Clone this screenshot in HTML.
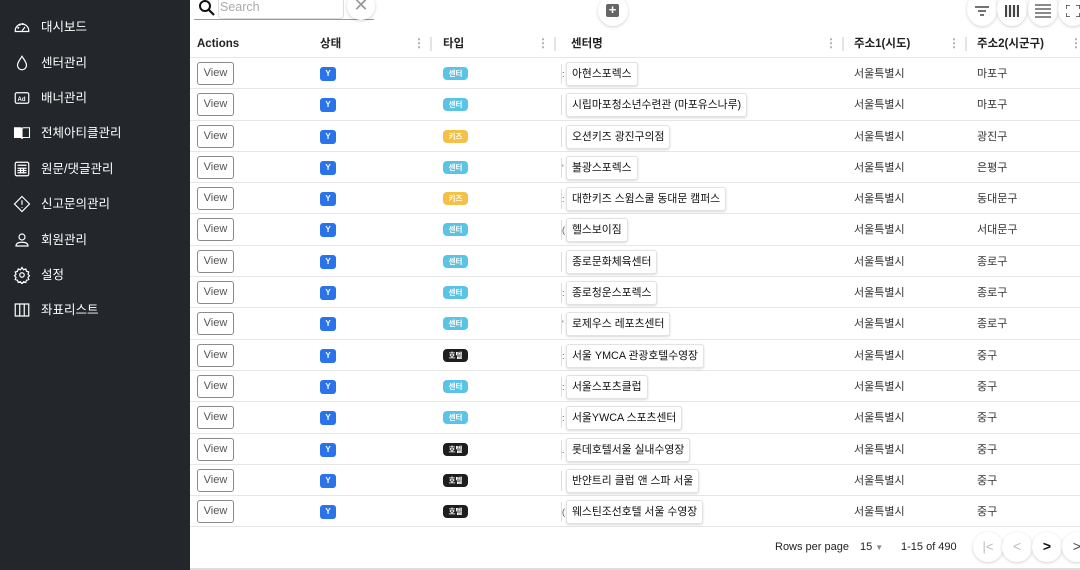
<!DOCTYPE html>
<html><head><meta charset="utf-8"><style>
*{box-sizing:border-box;margin:0;padding:0}
body{width:1080px;height:570px;overflow:hidden;background:#fff;font-family:"Liberation Sans","Noto Sans CJK KR",sans-serif;position:relative}
.sb{position:absolute;left:0;top:0;width:190px;height:570px;background:#23262b}
.sb .it{position:absolute;left:13px;height:20px;display:flex;align-items:center;color:#fff;font-size:12.5px;line-height:20px}
.sb .it svg{width:18px;height:18px;margin-right:10px;flex:none}
.main{position:absolute;left:190px;top:0;width:890px;height:570px}
.hdr{position:absolute;top:30px;left:0;width:890px;height:28px;border-bottom:1px solid #e6e6e6;font-size:11.5px;font-weight:bold;color:#222}
.hdr span{position:absolute;top:7px;line-height:14px}
.dots{position:absolute;top:4px;width:20px;height:20px;border-radius:50%;color:#aaa;font-size:12px;text-align:center;line-height:19px;font-weight:bold}
.sep{position:absolute;top:7px;width:2px;height:14px;background:#e4e4e4}
.row{position:relative;height:31.3px;border-bottom:1px solid #e6e6e6;font-size:11px;color:#222;line-height:14px}
.row>*{position:absolute}
.view{left:7px;top:4px;width:37px;height:23px;border:1px solid #8a8a8a;border-radius:3px;color:#555;font-size:11px;text-align:center;line-height:21px}
.y{left:130px;top:9px;width:16px;height:14px;border-radius:3px;background:#2a73e8;color:#fff;font-size:8px;font-weight:bold;text-align:center;line-height:14px}
.t{left:253px;top:9px;width:25px;height:13px;border-radius:4px;color:#fff;font-size:7.5px;font-weight:bold;text-align:center;line-height:13px}
.c{background:#5bc4e6}.k{background:#f4c045}.h{background:#1e1e1e}
.trunc{left:371px;top:6px;width:6px;height:20px;border-left:1px solid #ddd;font-size:9px;color:#555;line-height:20px;overflow:hidden}
.chip{left:376px;top:4px;height:24px;padding:0 5px;border:1px solid #e2e2e2;border-radius:3px;box-shadow:0 1px 2px rgba(0,0,0,.15);line-height:22px;font-size:10.8px;background:#fff;white-space:nowrap;color:#111}
.a1{left:664px;top:9px;color:#333}.a2{left:787px;top:9px;color:#333}
.cb{position:absolute;border-radius:50%;background:#fff;box-shadow:0 1px 3px rgba(0,0,0,.18)}
</style></head><body>
<div class="sb">
 <div class="it" style="top:17px"><svg viewBox="0 0 24 24" fill="none" stroke="#fff" stroke-width="1.6"><path d="M3 17a9 9 0 1 1 18 0v1H3z"/><path d="M12 17l4-5"/><circle cx="7" cy="13" r=".6"/><circle cx="9" cy="9" r=".6"/><circle cx="13" cy="8" r=".6"/></svg>대시보드</div>
 <div class="it" style="top:53px"><svg viewBox="0 0 24 24" fill="none" stroke="#fff" stroke-width="1.6"><path d="M12 3C9 8 6 11 6 15a6 6 0 0 0 12 0c0-4-3-7-6-12z"/></svg>센터관리</div>
 <div class="it" style="top:88px"><svg viewBox="0 0 24 24" fill="none" stroke="#fff" stroke-width="1.6"><rect x="3" y="5" width="18" height="14" rx="2"/><text x="6" y="16" font-size="8" fill="#fff" stroke="none" font-weight="bold" font-family="Liberation Sans">Ad</text></svg>배너관리</div>
 <div class="it" style="top:123px"><svg viewBox="0 0 24 24" fill="#fff" stroke="#fff" stroke-width="1.4"><path d="M2 5h8a2 2 0 0 1 2 2v13a2 2 0 0 0-2-2H2z"/><path d="M22 5h-8a2 2 0 0 0-2 2v13a2 2 0 0 1 2-2h8z" fill="none"/></svg>전체아티클관리</div>
 <div class="it" style="top:159px"><svg viewBox="0 0 24 24" fill="none" stroke="#fff" stroke-width="1.6"><rect x="3" y="3" width="18" height="18" rx="2"/><path d="M6 7h12M6 11h12M6 14h12M6 17h12M10 11v7M14 11v7"/></svg>원문/댓글관리</div>
 <div class="it" style="top:194px"><svg viewBox="0 0 24 24" fill="none" stroke="#fff" stroke-width="1.6"><path d="M12 2l10 10-10 10L2 12z"/><path d="M12 7v6M12 16v1"/></svg>신고문의관리</div>
 <div class="it" style="top:230px"><svg viewBox="0 0 24 24" fill="none" stroke="#fff" stroke-width="1.6"><circle cx="12" cy="8" r="4"/><path d="M4 20c0-4 4-5 8-5s8 1 8 5z"/></svg>회원관리</div>
 <div class="it" style="top:265px"><svg viewBox="0 0 24 24" fill="none" stroke="#fff" stroke-width="1.6"><circle cx="12" cy="12" r="3"/><path d="M12 2l2 3 3-1 1 3 3 1-1 3 2 2-2 2 1 3-3 1-1 3-3-1-2 3-2-3-3 1-1-3-3-1 1-3-2-2 2-2-1-3 3-1 1-3 3 1z"/></svg>설정</div>
 <div class="it" style="top:300px"><svg viewBox="0 0 24 24" fill="none" stroke="#fff" stroke-width="1.6"><path d="M3 4h18v16H3zM9 4v16M15 4v16"/></svg>좌표리스트</div>
</div>
<div class="main">
 <svg style="position:absolute;left:8px;top:0" width="18" height="16" viewBox="0 0 18 16"><circle cx="7" cy="6" r="5" fill="none" stroke="#111" stroke-width="2"/><path d="M11 10l5 5" stroke="#111" stroke-width="2.2"/></svg>
 <div style="position:absolute;left:28px;top:-6px;width:126px;height:25px;border:1px solid #ddd;border-radius:4px;font-size:12.5px;color:#aaa;padding:5px 0 0 1px;line-height:14px">Search</div>
 <div style="position:absolute;left:4px;top:19px;width:180px;height:1px;background:#999"></div>
 <div class="cb" style="left:157px;top:-8px;width:28px;height:28px;color:#999;font-size:18px;text-align:center;line-height:26px">✕</div>
 <div class="cb" style="left:408px;top:-4px;width:30px;height:30px"><div style="position:absolute;left:8px;top:8px;width:13px;height:13px;background:#666;border-radius:2px;color:#fff;font-size:13px;line-height:12px;text-align:center;font-weight:bold">+</div></div>
 <div class="cb" style="left:777px;top:-8px;width:30px;height:34px;text-align:center"><svg width="14" height="10" style="margin-top:14px"><path d="M0 1h14M3 5h8M5 9h4" stroke="#444" stroke-width="1.4"/></svg></div>
 <div class="cb" style="left:807px;top:-8px;width:30px;height:34px;text-align:center"><svg width="14" height="12" style="margin-top:13px"><path d="M1 0v12M5 0v12M9 0v12M13 0v12" stroke="#444" stroke-width="2.2"/></svg></div>
 <div class="cb" style="left:838px;top:-8px;width:30px;height:34px;text-align:center"><svg width="16" height="14" style="margin-top:12px"><path d="M0 1h16M0 5h16M0 9h16M0 13h16" stroke="#444" stroke-width="1.2"/></svg></div>
 <div class="cb" style="left:868px;top:-8px;width:30px;height:34px"><svg width="14" height="12" style="margin:13px 0 0 8px"><path d="M0 4V0h4M10 0h4v4M0 8v4h4M14 8v4h-4" fill="none" stroke="#444" stroke-width="1.5"/></svg></div>

 <div class="hdr">
  <span style="left:7px">Actions</span>
  <span style="left:130px">상태</span><div class="dots" style="left:219px">⋮</div><div class="sep" style="left:240px"></div>
  <span style="left:253px">타입</span><div class="dots" style="left:343px">⋮</div><div class="sep" style="left:364px"></div>
  <span style="left:381px">센터명</span><div class="dots" style="left:631px">⋮</div><div class="sep" style="left:652px"></div>
  <span style="left:664px">주소1(시도)</span><div class="dots" style="left:754px">⋮</div><div class="sep" style="left:775px"></div>
  <span style="left:787px">주소2(시군구)</span><div class="dots" style="left:876px">⋮</div>
 </div>
 <div style="position:absolute;top:58px;left:0;width:890px">
  <div class="row"><div class="view">View</div><div class="y">Y</div><div class="t c">센터</div><div class="trunc">:</div><div class="chip">아현스포렉스</div><div class="a1">서울특별시</div><div class="a2">마포구</div></div>
  <div class="row"><div class="view">View</div><div class="y">Y</div><div class="t c">센터</div><div class="trunc"></div><div class="chip">시립마포청소년수련관 (마포유스나루)</div><div class="a1">서울특별시</div><div class="a2">마포구</div></div>
  <div class="row"><div class="view">View</div><div class="y">Y</div><div class="t k">키즈</div><div class="trunc"></div><div class="chip">오션키즈 광진구의점</div><div class="a1">서울특별시</div><div class="a2">광진구</div></div>
  <div class="row"><div class="view">View</div><div class="y">Y</div><div class="t c">센터</div><div class="trunc">'</div><div class="chip">불광스포렉스</div><div class="a1">서울특별시</div><div class="a2">은평구</div></div>
  <div class="row"><div class="view">View</div><div class="y">Y</div><div class="t k">키즈</div><div class="trunc">:</div><div class="chip">대한키즈 스윔스쿨 동대문 캠퍼스</div><div class="a1">서울특별시</div><div class="a2">동대문구</div></div>
  <div class="row"><div class="view">View</div><div class="y">Y</div><div class="t c">센터</div><div class="trunc">(</div><div class="chip">헬스보이짐</div><div class="a1">서울특별시</div><div class="a2">서대문구</div></div>
  <div class="row"><div class="view">View</div><div class="y">Y</div><div class="t c">센터</div><div class="trunc"></div><div class="chip">종로문화체육센터</div><div class="a1">서울특별시</div><div class="a2">종로구</div></div>
  <div class="row"><div class="view">View</div><div class="y">Y</div><div class="t c">센터</div><div class="trunc">:</div><div class="chip">종로청운스포렉스</div><div class="a1">서울특별시</div><div class="a2">종로구</div></div>
  <div class="row"><div class="view">View</div><div class="y">Y</div><div class="t c">센터</div><div class="trunc">'</div><div class="chip">로제우스 레포츠센터</div><div class="a1">서울특별시</div><div class="a2">종로구</div></div>
  <div class="row"><div class="view">View</div><div class="y">Y</div><div class="t h">호텔</div><div class="trunc">:</div><div class="chip">서울 YMCA 관광호텔수영장</div><div class="a1">서울특별시</div><div class="a2">중구</div></div>
  <div class="row"><div class="view">View</div><div class="y">Y</div><div class="t c">센터</div><div class="trunc">:</div><div class="chip">서울스포츠클럽</div><div class="a1">서울특별시</div><div class="a2">중구</div></div>
  <div class="row"><div class="view">View</div><div class="y">Y</div><div class="t c">센터</div><div class="trunc">:</div><div class="chip">서울YWCA 스포츠센터</div><div class="a1">서울특별시</div><div class="a2">중구</div></div>
  <div class="row"><div class="view">View</div><div class="y">Y</div><div class="t h">호텔</div><div class="trunc">.</div><div class="chip">롯데호텔서울 실내수영장</div><div class="a1">서울특별시</div><div class="a2">중구</div></div>
  <div class="row"><div class="view">View</div><div class="y">Y</div><div class="t h">호텔</div><div class="trunc"></div><div class="chip">반얀트리 클럽 앤 스파 서울</div><div class="a1">서울특별시</div><div class="a2">중구</div></div>
  <div class="row"><div class="view">View</div><div class="y">Y</div><div class="t h">호텔</div><div class="trunc">(</div><div class="chip">웨스틴조선호텔 서울 수영장</div><div class="a1">서울특별시</div><div class="a2">중구</div></div>
 </div>
 <div style="position:absolute;left:585px;top:541px;font-size:11px;color:#222">Rows per page</div>
 <div style="position:absolute;left:670px;top:541px;font-size:11px;color:#222">15 <span style="color:#888;font-size:8px">▼</span></div>
 <div style="position:absolute;left:711px;top:541px;font-size:11px;color:#222">1-15 of 490</div>
 <div class="cb" style="left:783px;top:532px;width:30px;height:30px;color:#bbb;font-size:13px;text-align:center;line-height:29px">|&lt;</div>
 <div class="cb" style="left:812px;top:532px;width:30px;height:30px;color:#bbb;font-size:14px;text-align:center;line-height:29px">&lt;</div>
 <div class="cb" style="left:842px;top:532px;width:30px;height:30px;color:#111;font-size:14px;text-align:center;line-height:29px;font-weight:bold">&gt;</div>
 <div class="cb" style="left:872px;top:532px;width:30px;height:30px;color:#444;font-size:14px;text-align:center;line-height:29px">&gt;</div>
 <div style="position:absolute;left:0;top:568px;width:890px;height:2px;background:#ddd"></div>
</div>
</body></html>
